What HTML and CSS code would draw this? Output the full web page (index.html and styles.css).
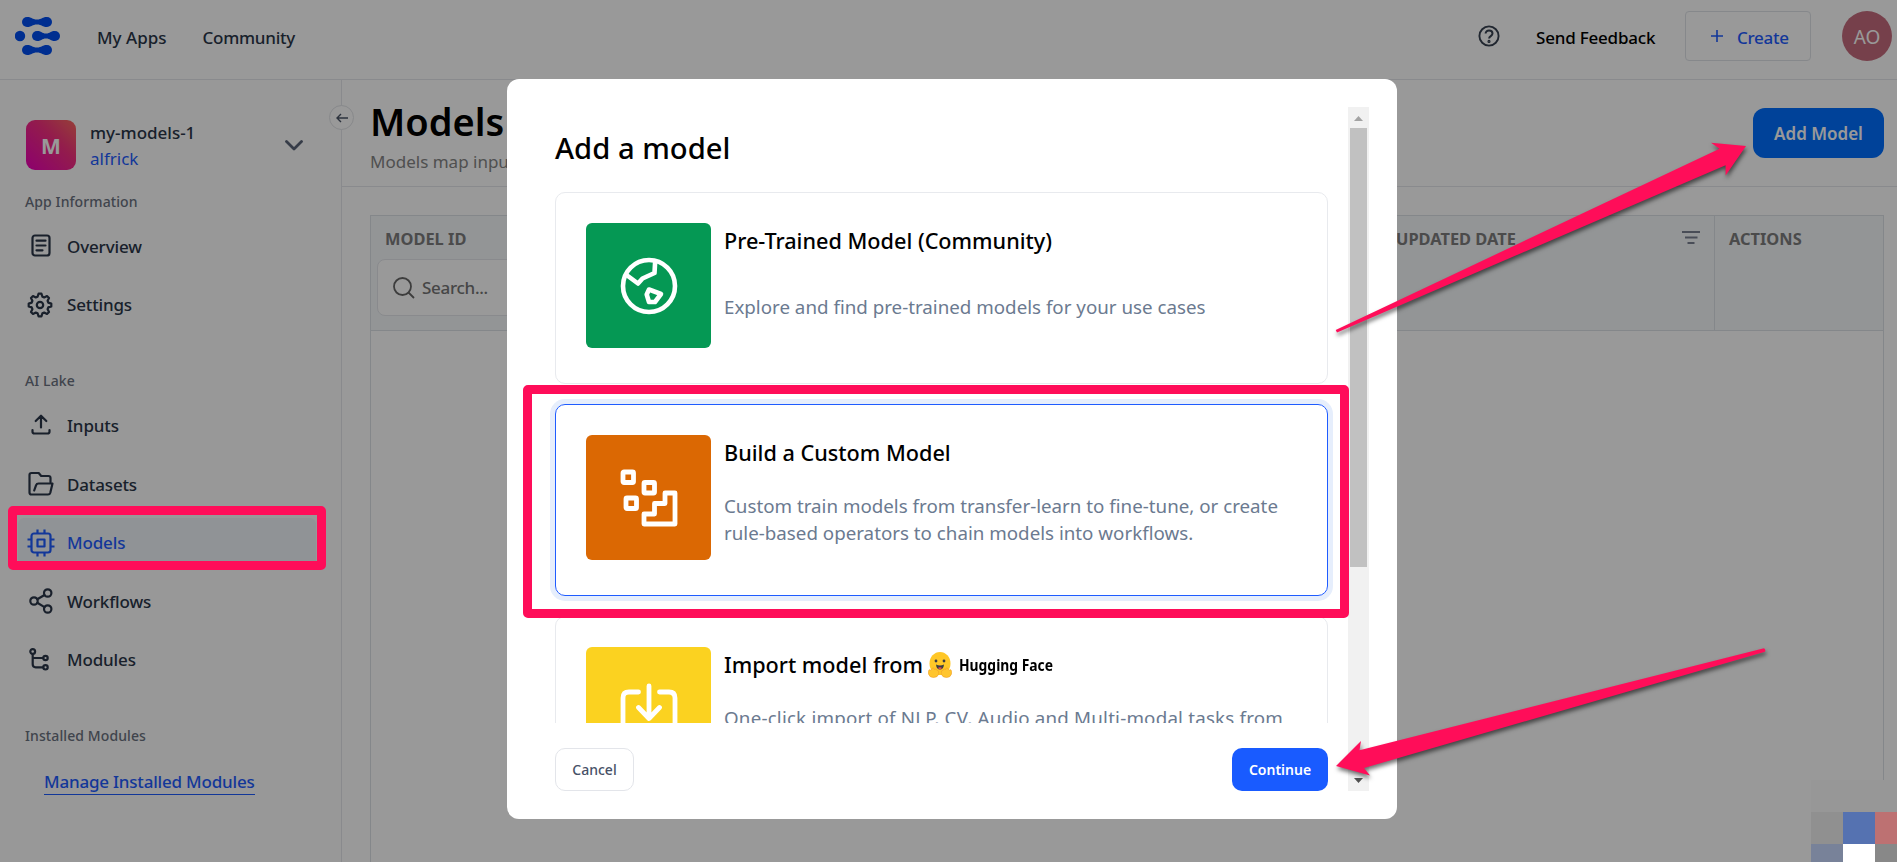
FILE: index.html
```html
<!DOCTYPE html>
<html lang="en">
<head>
<meta charset="utf-8">
<title>Models</title>
<link rel="stylesheet" href="styles.css">
</head>
<body>
<div class="app">
  <header class="topbar">
    <svg class="logo" width="46" height="40" viewBox="0 0 46 40"><g fill="#004ef0"><circle cx="12" cy="6" r="5"/><circle cx="32" cy="6" r="5"/><path d="M12 1c5 0 5 2.500 10 2.500S27 1 32 1v10c-5 0-5-2.500-10-2.500S17 11 12 11z"/><circle cx="5" cy="20" r="5.200"/><circle cx="22" cy="20" r="5"/><circle cx="40" cy="20" r="5"/><path d="M22 15c5 0 4.500 2.500 9 2.500s4-2.500 9-2.500v10c-5 0-4.500-2.500-9-2.500s-4 2.500-9 2.500z"/><circle cx="12" cy="34" r="5"/><circle cx="32" cy="34" r="5"/><path d="M12 29c5 0 5 2.500 10 2.500S27 29 32 29v10c-5 0-5-2.500-10-2.500S17 39 12 39z"/></g></svg>
    <nav class="topnav"><a>My Apps</a><a class="comm">Community</a></nav>
    <div class="topright">
      <svg class="help" width="22" height="22" viewBox="0 0 22 22" fill="none" stroke="#374151" stroke-width="1.900"><circle cx="11" cy="11" r="9.600"/><path d="M7.600 8.600c0-4.300 6.900-4.100 6.900 0 0 2.600-3.400 2.500-3.400 5" stroke-width="2"/><circle cx="11" cy="16.400" r=".6"/></svg>
      <a class="feedback">Send Feedback</a>
      <button class="create"><svg width="12" height="12" viewBox="0 0 12 12" stroke="#1f5cff" stroke-width="1.600"><path d="M6 0v12M0 6h12"/></svg><span>Create</span></button>
      <div class="user">AO</div>
    </div>
  </header>
  <div class="body">
    <aside class="sidebar">
      <div class="appcard">
        <div class="appicon">M</div>
        <div class="appname"><b>my-models-1</b><a>alfrick</a></div>
        <svg width="18" height="11" viewBox="0 0 18 11" fill="none" stroke="#5b6578" stroke-width="2.800" stroke-linecap="round" stroke-linejoin="round"><path d="M1.500 1.500 9 9l7.500-7.500"/></svg>
      </div>
      <h6>App Information</h6>
      <ul class="first-list">
        <li><svg class="ic" viewBox="0 0 28 28"><rect x="5.500" y="3.500" width="17" height="20" rx="2.500"/><path d="M9.500 8.700h9M9.500 13.500h9M9.500 18.300h6"/></svg><span>Overview</span></li>
        <li><svg class="ic" viewBox="0 0 28 28"><path d="m10.600 5.700 1-3h2.800l1 3 1.800.7 2.800-1.400 2 2-1.400 2.800.7 1.800 3 1v2.800l-3 1-.7 1.800 1.400 2.800-2 2-2.800-1.400-1.800.7-1 3h-2.800l-1-3-1.800-.7L6 23l-2-2 1.400-2.800-.7-1.800-3-1v-2.800l3-1 .7-1.800L4 7l2-2 2.800 1.400z"/><circle cx="13" cy="14" r="3.200"/></svg><span>Settings</span></li>
      </ul>
      <h6>AI Lake</h6>
      <ul>
        <li><svg class="ic" viewBox="0 0 28 28"><path d="M14 15.500V4.500M8.700 9 14 3.700 19.300 9M5.500 18v1.800q0 1.700 2 1.700h13q2 0 2-1.700V18"/></svg><span>Inputs</span></li>
        <li><svg class="ic" viewBox="0 0 28 28"><path d="M23.500 12V8q0-2-2-2h-7.300l-2.500-3H4.500q-2 0-2 2v17.500q0 2 2 2H21q1.800 0 2.300-1.800L25.500 13.500H11.600q-2 0-2.500 1.700L7.200 20.500"/></svg><span>Datasets</span></li>
        <li class="active"><svg class="ic" viewBox="0 0 28 28"><rect x="4.500" y="4.500" width="19" height="19" rx="2.500"/><rect x="10.500" y="10.500" width="7" height="7"/><path stroke-linecap="butt" d="M10.500 4.500V.5M17.500 4.500V.5M10.500 23.500v4M17.500 23.500v4M4.500 10.500h-4M4.500 17.500h-4M23.500 10.500h4M23.500 17.500h4"/></svg><span>Models</span></li>
        <li><svg class="ic" viewBox="0 0 28 28"><circle cx="7" cy="14" r="3.700"/><circle cx="20.700" cy="6" r="3.700"/><circle cx="20.700" cy="22" r="3.700"/><path d="M10.300 12.300 17.500 8M10.300 15.800l7.200 4.300"/></svg><span>Workflows</span></li>
        <li><svg class="ic" viewBox="0 0 28 28"><circle cx="5.700" cy="5.500" r="2.400"/><circle cx="18.500" cy="12" r="2.200"/><circle cx="18.500" cy="21.300" r="2.200"/><path d="M5.700 8v10.300q0 3 3 3h7.500M5.700 12h10.500"/></svg><span>Modules</span></li>
      </ul>
      <h6>Installed Modules</h6>
      <a class="manage">Manage Installed Modules</a>
    </aside>
    <main class="main">
      <span class="collapse"><svg width="12" height="10" viewBox="0 0 12 10" fill="none" stroke="#4b5568" stroke-width="1.400"><path d="M12 5H1M5 1 1 5l4 4"/></svg></span>
      <div class="pagehead">
        <div><h1>Models</h1><p>Models map inputs</p></div>
        <button class="addmodel">Add Model</button>
      </div>
      <div class="table">
        <div class="thead">
          <div class="col first"><b>MODEL ID</b><div class="search"><svg width="22" height="22" viewBox="0 0 22 22" fill="none" stroke="#676767" stroke-width="1.800"><circle cx="9.500" cy="9.500" r="8.500"/><path d="m15.500 15.500 5.500 5.500"/></svg><span>Search...</span></div></div>
          <div class="col upd"><b>UPDATED DATE</b><svg width="18" height="13" viewBox="0 0 18 13" stroke="#7a8191" stroke-width="1.900"><path d="M0 1h18M3 6.500h12.500M5.500 12h7"/></svg></div>
          <div class="col act"><b>ACTIONS</b></div>
        </div>
      </div>
    </main>
  </div>
</div>

<div class="overlay">
  <section class="modal">
    <div class="dialog">
      <div class="scroll">
        <h2>Add a model</h2>
        <article class="card">
          <div class="tile green"><svg width="58" height="58" viewBox="0 0 58 58" fill="none" stroke="#fff" stroke-width="4.600" stroke-linejoin="round"><circle cx="29" cy="29" r="26"/><path d="m6.500 18 11.500 8.500 4.500-5L34.500 16l.7-12M29 32.500 41 37l-6 8h-6l-2.300-7.500z"/></svg></div>
          <div class="info"><h3>Pre-Trained Model (Community)</h3><p class="one">Explore and find pre-trained models for your use cases</p></div>
        </article>
        <article class="card selected">
          <div class="tile orange"><svg width="58" height="58" viewBox="0 0 58 58" fill="none" stroke="#fff" stroke-width="4.800" stroke-linejoin="round"><rect x="3" y="3" width="10.500" height="10.500" rx="1"/><rect x="24" y="13.500" width="10.500" height="10.500" rx="1"/><rect x="6" y="29" width="10.500" height="10.500" rx="1"/><path d="M45 24h10v31H24V45h10.500V34.500H45z"/></svg></div>
          <div class="info"><h3>Build a Custom Model</h3><p>Custom train models from transfer-learn to fine-tune, or create<br>rule-based operators to chain models into workflows.</p></div>
        </article>
        <article class="card">
          <div class="tile yellow"><svg width="58" height="58" viewBox="0 0 58 58" fill="none" stroke="#fff" stroke-width="4.800" stroke-linecap="round" stroke-linejoin="round"><path d="M29 5v32M18.500 26.500 29 37.500l10.500-11M18.500 11H9q-6 0-6 6v32q0 6 6 6h40q6 0 6-6V17q0-6-6-6h-9.500"/></svg></div>
          <div class="info"><h3><span>Import model from</span>
            <svg class="hug" width="24" height="26" viewBox="0 0 24 26"><ellipse cx="12" cy="11.500" rx="10.500" ry="11.500" fill="#ffc727"/><circle cx="8" cy="9" r="1.400" fill="#3a3b45"/><circle cx="16" cy="9" r="1.400" fill="#3a3b45"/><path d="M8 12.500q4 2 8 0-.5 5-4 5t-4-5" fill="#3a3b45"/><path d="M9.800 16q2.200-1.500 4.400 0-2.200 2.300-4.400 0" fill="#ef4e4e"/><g fill="#ffc52e" stroke="#f0a02a" stroke-width=".6"><path d="M1 18q1-1 2 .5L4.500 16q1.500-1 1.700 1.500Q8.500 16 8.500 18q3 0 2.200 4-1 3.500-5.200 3.500-4 0-5-3.500-.6-2.500.5-4z"/><path d="M23 18q-1-1-2 .5L19.500 16q-1.500-1-1.700 1.500Q15.500 16 15.500 18q-3 0-2.200 4 1 3.500 5.200 3.500 4 0 5-3.500.6-2.500-.5-4z"/></g></svg>
            <span class="hf">Hugging Face</span></h3><p class="wide">One-click import of NLP, CV, Audio and Multi-modal tasks from</p></div>
        </article>
      </div>
      <footer><button class="cancel">Cancel</button><button class="continue">Continue</button></footer>
    </div>
    <div class="bar"><svg width="9" height="5" viewBox="0 0 9 5" fill="#a3a3a3"><path d="M4.500 0 9 5H0z"/></svg><i></i><svg width="9" height="5" viewBox="0 0 9 5" fill="#505050"><path d="M0 0h9L4.500 5z"/></svg></div>
  </section>
</div>

<div class="mark mark-nav"></div>
<div class="mark mark-card"></div>
<svg class="arrows" width="1897" height="862" viewBox="0 0 1897 862" fill="#ff0d59"><path d="M1335.700 330 1719.600 148.700 1711 142.700 1746 146 1725.600 175.600V165.300L1337 332.500z"/><path d="M1336 766 1361 741l-1.500 9.300L1764 648.200q2 1.500 1 3.500L1364 768l6 7.500z"/></svg>
<div class="mosaic"><i class="strip"></i><i></i><i></i><i></i><i></i><i></i><i></i></div>
</body>
</html>
```
FILE: styles.css
```css
* { box-sizing: border-box; margin: 0; padding: 0; }
body { width: 1897px; height: 862px; overflow: hidden; position: relative; background: #fff; font-family: "Noto Sans", "Open Sans", sans-serif; font-size: 17px; color: #2a3649; }
button { font: inherit; border: 0; background: none; }
ul { list-style: none; }
span, a, b, h1, h2, h3, p { white-space: nowrap; }
.app { height: 862px; display: flex; flex-direction: column; overflow: hidden; }
.topbar { height: 80px; flex: none; border-bottom: 1px solid #e5e7eb; display: flex; align-items: center; padding: 0 5px 7px 15px; font-weight: 500; }
.topnav { display: flex; gap: 36px; margin-left: 36px; }
.topnav a, .feedback, .create span { position: relative; top: 1px; }
.comm { letter-spacing: -.25px; }
.topright { margin-left: auto; display: flex; align-items: center; }
.feedback { margin-left: 36px; color: #000; width: 118px; letter-spacing: -.2px; }
.create { width: 126px; height: 50px; margin-left: 31px; border: 1px solid #e0e3e8; border-radius: 4px; display: flex; align-items: center; gap: 14px; padding-left: 25px; color: #1f5cff; font-weight: 500; letter-spacing: -.3px; }
.user { width: 50px; height: 50px; border-radius: 50%; background: #c56c7d; margin-left: 31px; color: #fff; font-size: 19px; font-weight: 400; line-height: 52px; text-align: center; }
.body { flex: 1; display: flex; min-height: 0; }
.sidebar { width: 342px; flex: none; border-right: 1px solid #e5e7eb; background: #fdfdfd; padding-top: 40px; }
.appcard { display: flex; align-items: center; padding-left: 26px; height: 50px; }
.appicon { width: 50px; height: 50px; border-radius: 9px; background: linear-gradient(45deg, #eb00b8, #f5307f 60%, #fa6a5e); color: #fff; font-weight: 700; font-size: 21px; line-height: 52px; text-align: center; }
.appname { margin-left: 14px; padding-top: 2px; width: 195px; line-height: 26px; display: flex; flex-direction: column; }
.appname b { font-weight: 500; }
.appname a { color: #1f5cff; }
.sidebar h6 { margin: 18px 0 0 25px; height: 28px; line-height: 28px; font-size: 14px; font-weight: 500; color: #6b7280; letter-spacing: .1px; }
.sidebar ul { padding: 6px 0 0 18px; }
.sidebar .first-list { padding-top: 5px; }
.sidebar li { height: 50px; margin-bottom: 8.500px; width: 298px; border-radius: 6px; display: flex; align-items: center; gap: 12px; padding-left: 9px; font-weight: 500; letter-spacing: -.15px; }
.sidebar ul + h6 { margin-top: 37px; }
.sidebar li.active { background: #f0f5fb; color: #1f5cff; }
.ic { width: 28px; height: 28px; fill: none; stroke: currentColor; stroke-width: 2.200; stroke-linecap: round; stroke-linejoin: round; }
.manage { display: inline-block; margin: 20px 0 0 44px; line-height: 24px; font-weight: 500; color: #1f5cff; border-bottom: 1px solid #1f5cff; letter-spacing: -.2px; }
.main { flex: 1; position: relative; display: flex; flex-direction: column; }
.collapse { position: absolute; left: -13px; top: 25px; width: 25px; height: 25px; border: 1px solid #e2e4e8; border-radius: 50%; background: #fff; display: flex; align-items: center; justify-content: center; }
.pagehead { height: 107px; flex: none; border-bottom: 1px solid #e5e7eb; display: flex; justify-content: space-between; padding: 14px 13px 0 28px; }
.pagehead h1 { font-size: 38px; font-weight: 600; color: #000; line-height: 54px; }
.pagehead p { color: #858585; line-height: 24px; font-size: 17px; margin-top: 2px; }
.addmodel { width: 131px; height: 50px; margin-top: 14px; border-radius: 12px; background: #006fff; color: #fff; font-weight: 600; }
.table { margin: 28px 13px 0 28px; flex: 1; border: 1px solid #dde1e6; border-bottom: 0; }
.thead { height: 115px; background: #f5f8fb; border-bottom: 1px solid #dde1e6; display: flex; font-size: 16.400px; color: #7d7d7d; }
.col { padding: 11px 14px 0; border-right: 1px solid #dde1e6; }
.col b { line-height: 24px; display: block; }
.first { flex: 1; border: 0; padding: 11px 6px 0; }
.first b { padding-left: 8px; }
.search { width: 250px; height: 57px; margin-top: 8px; background: #fff; border: 1px solid #e5e7eb; border-radius: 8px; display: flex; align-items: center; gap: 7px; padding-left: 15px; color: #757575; font-weight: 500; font-size: 17px; letter-spacing: -.3px; }
.upd { width: 333px; display: flex; justify-content: space-between; }
.upd svg { margin-top: 4px; }
.act { width: 168px; border: 0; }
.overlay { position: absolute; inset: 0; background: rgba(0,0,0,.4); }
.modal { position: absolute; left: 507px; top: 79px; width: 890px; height: 740px; border-radius: 12px; background: #fff; display: flex; padding: 28px 28px 28px 0; }
.dialog { width: 841px; display: flex; flex-direction: column; padding-left: 48px; }
.scroll { height: 616px; overflow: hidden; padding-left: 8px; margin-left: -8px; flex: none; }
.scroll h2 { font-size: 29.200px; font-weight: 500; color: #000; line-height: 40px; padding-top: 21px; height: 85px; }
.card { width: 773px; height: 192px; border: 1px solid #e8eaee; border-radius: 10px; margin-bottom: 20px; padding: 30px; display: flex; gap: 13px; }
.selected { border-color: #1f5cff; box-shadow: 0 0 0 5px #e6eefc; }
.tile { width: 125px; height: 125px; border-radius: 6px; flex: none; display: flex; align-items: center; justify-content: center; }
.green { background: #059854; }
.orange { background: #db6803; }
.yellow { background: #fbd220; }
.tile svg { overflow: visible; }
.info h3 { font-size: 21.650px; font-weight: 500; color: #000; line-height: 30px; height: 30px; margin-top: 3px; display: flex; align-items: center; }
.info p { font-size: 18.760px; line-height: 27px; color: #6b7a90; margin-top: 24px; }
.info p.one { margin-top: 37px; }
.info p.wide { letter-spacing: .2px; }
.hug { margin: 0 7px 0 5px; }
.hf { font-weight: 700; font-size: 16.500px; transform: scaleX(.84); transform-origin: left; }
footer { width: 773px; display: flex; justify-content: space-between; margin-top: 25px; }
footer button { height: 43px; border-radius: 10px; font-size: 14px; font-weight: 500; }
.cancel { width: 79px; border: 1px solid #e3e5ea; color: #475167; }
.continue { width: 96px; background: #195bff; color: #fff; font-weight: 600; }
.bar { width: 21px; background: #f1f1f1; display: flex; flex-direction: column; align-items: center; padding: 9px 0 8px; }
.bar i { width: 17px; height: 439px; background: #c1c1c1; margin-top: 7px; margin-bottom: auto; }
.mark { position: absolute; border: 9px solid #ff0d59; border-radius: 5px; }
.mark-nav { left: 8px; top: 506px; width: 318px; height: 64px; }
.mark-card { left: 523px; top: 385px; width: 826px; height: 233px; }
.arrows { position: absolute; left: 0; top: 0; filter: drop-shadow(1px 3px 2px rgba(0,0,0,.55)); }
.mosaic { position: absolute; left: 1811px; top: 780px; width: 86px; height: 82px; display: grid; grid-template: 32px 32px 18px / 32px 32px 22px; }
.mosaic i { background: #909090; }
.mosaic .strip { grid-column: 1 / 4; background: #979797; }
.mosaic i:nth-child(3) { background: #5572b1; }
.mosaic i:nth-child(4) { background: #bd7172; }
.mosaic i:nth-child(5) { background: #788299; }
.mosaic i:nth-child(6) { background: #fff; }
.mosaic i:nth-child(7) { background: #888; }
```
